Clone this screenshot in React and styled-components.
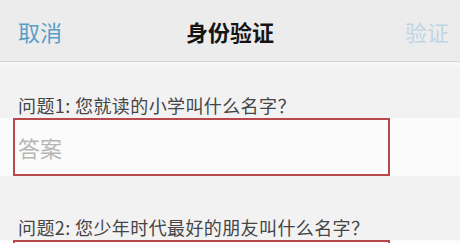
import React from 'react';
import styled, { createGlobalStyle } from 'styled-components';

const GlobalStyle = createGlobalStyle`
  html, body {
    margin: 0;
    padding: 0;
    background: #f2f2f2;
  }
  body {
    font-family: "Noto Sans CJK SC", "Noto Sans", sans-serif;
  }
`;

const Page = styled.div`
  width: 460px;
  height: 243px;
  overflow: hidden;
  background: #f2f2f2;
`;

const NavBar = styled.header`
  height: 61px;
  display: flex;
  align-items: center;
  justify-content: space-between;
  padding: 0 11px 0 18px;
  background: #ececec;
  border-bottom: 1px solid #d6d6d6;
  position: relative;
`;

const NavButton = styled.span`
  font-size: 22px;
  color: ${(p) => (p.disabled ? '#bfd5e5' : '#5a9ec8')};
`;

const Title = styled.h1`
  position: absolute;
  left: 0;
  right: 0;
  margin: 0;
  text-align: center;
  font-size: 22px;
  font-weight: 700;
  color: #151515;
  pointer-events: none;
`;

const Content = styled.main`
  background: linear-gradient(#f8f8f8 0, #f2f2f2 8px);
  padding-top: 31px;
`;

const Question = styled.section`
  & + & {
    margin-top: 39px;
  }
`;

const Label = styled.div`
  padding-left: 18px;
  font-size: 18px;
  line-height: 24px;
  letter-spacing: 0.4px;
  color: #454545;
  margin-bottom: 1px;
`;

const InputRow = styled.div`
  background: #fbfbfb;
  height: 58px;
  display: flex;
  align-items: stretch;
`;

const AnswerBox = styled.div`
  margin-left: 13px;
  width: 377px;
  box-sizing: border-box;
  border: 2.5px solid #b9484d;
  display: flex;
  align-items: center;
  padding-left: 3px;
  font-size: 22px;
  color: #b6b6b6;
`;

export default function App() {
  return (
    <Page>
      <GlobalStyle />
      <NavBar>
        <NavButton>取消</NavButton>
        <Title>身份验证</Title>
        <NavButton disabled>验证</NavButton>
      </NavBar>
      <Content>
        <Question>
          <Label>问题1: 您就读的小学叫什么名字？</Label>
          <InputRow>
            <AnswerBox>答案</AnswerBox>
          </InputRow>
        </Question>
        <Question>
          <Label>问题2: 您少年时代最好的朋友叫什么名字？</Label>
          <InputRow>
            <AnswerBox>答案</AnswerBox>
          </InputRow>
        </Question>
      </Content>
    </Page>
  );
}
